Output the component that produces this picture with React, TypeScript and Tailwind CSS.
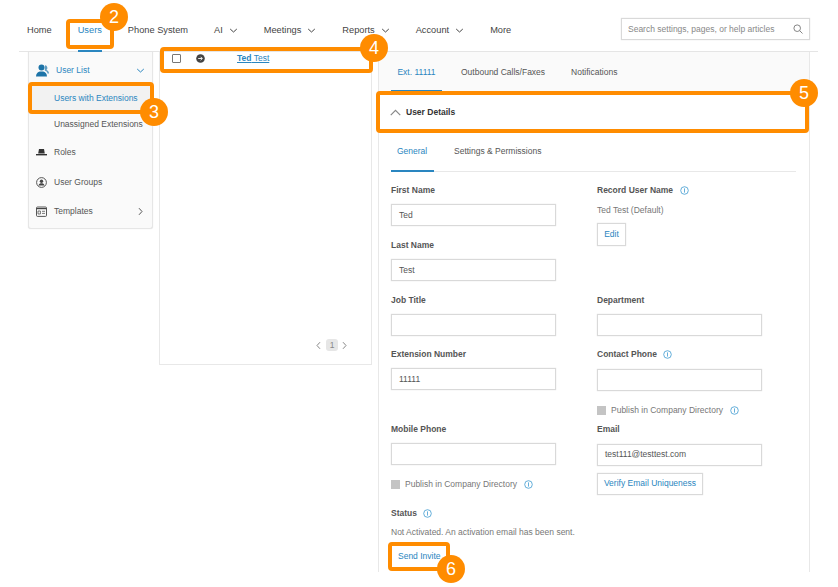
import React from "react";

const Chevron = ({ dir = "down", className = "", size = 9 }: { dir?: "down" | "up" | "right" | "left"; className?: string; size?: number }) => {
  const d = { down: "M1.2 3l3.3 3 3.3-3", up: "M.6 6.6l3.9-3.9 3.9 3.9", right: "M3 1.2l3 3.3-3 3.3", left: "M6 1.2L3 4.5l3 3.3" }[dir];
  return (
    <svg width={size} height={size} viewBox="0 0 9 9" fill="none" stroke="currentColor" strokeWidth="1" className={className}>
      <path d={d} />
    </svg>
  );
};

const Info = () => (
  <svg width="9" height="9" viewBox="0 0 9 9" fill="none" stroke="#3f9bd1" strokeWidth="0.8" className="shrink-0">
    <circle cx="4.5" cy="4.5" r="3.8" />
    <path d="M4.5 2.4v4.2" />
  </svg>
);

const NavItem = ({ label, menu, active }: { label: string; menu?: boolean; active?: boolean }) => (
  <div className={`relative flex h-full items-center gap-[6px] pt-[11px] ${active ? "text-[#2a86c0]" : "text-[#444]"}`}>
    <span>{label}</span>
    {menu && <Chevron className="-mt-[2px]" />}
    {active && <div className="absolute -bottom-px left-0 right-0 h-[2px] bg-[#2a86c0]" />}
  </div>
);

const Label = ({ children, info, gap = "gap-[6px]" }: { children: React.ReactNode; info?: boolean; gap?: string }) => (
  <div className={`flex h-[14px] items-center ${gap} text-[8.5px] font-bold text-[#555]`}>
    <span>{children}</span>
    {info && <Info />}
  </div>
);

const Input = ({ value = "", className = "" }: { value?: string; className?: string }) => (
  <div className={`flex h-[22px] w-[165px] items-center border border-[#d9d9d9] pl-[7px] text-[8.5px] text-[#555] shadow-[0_0_1px_#ddd] ${className}`}>
    {value}
  </div>
);

const Field = ({ label, value, info, mt = "mt-[12px]" }: { label: string; value?: string; info?: boolean; mt?: string }) => (
  <div className={mt}>
    <Label info={info}>{label}</Label>
    <Input value={value} className="mt-[7px]" />
  </div>
);

const Publish = ({ className = "" }: { className?: string }) => (
  <div className={`flex items-center text-[8.5px] text-[#777] ${className}`}>
    <div className="mr-[5px] h-[9px] w-[9px] bg-[#c4c4c4]" />
    <span className="mr-[7px] whitespace-nowrap">Publish in Company Directory</span>
    <Info />
  </div>
);

const SideRow = ({ icon, label, right, className = "" }: { icon: React.ReactNode; label: string; right?: boolean; className?: string }) => (
  <div className={`flex h-[29.5px] items-center text-[#555] ${className}`}>
    <div className="flex w-[25px] shrink-0 justify-center pr-[1px]">{icon}</div>
    <span>{label}</span>
    {right && <Chevron dir="right" className="ml-auto mr-[7px]" />}
  </div>
);

const Callout = ({ n, className }: { n: number; className: string }) => (
  <div className={`absolute flex h-[28px] w-[28px] items-center justify-center rounded-full bg-[#ff8c00] text-[18px] text-white ${className}`}>
    {n}
  </div>
);

const Box = ({ className }: { className: string }) => (
  <div className={`absolute rounded-[4px] border-[4px] border-[#ff8c00] ${className}`} />
);

export default function App() {
  return (
    <div className="relative h-[587px] w-[838px] overflow-hidden bg-white text-[8.5px] font-['Liberation_Sans',Arial,sans-serif]">
      <header className="ml-[19px] flex h-[52px] w-[799px] items-center gap-[26px] border-b border-[#e5e5e5] pl-[8px] text-[9.25px]">
        <NavItem label="Home" />
        <NavItem label="Users" active />
        <NavItem label="Phone System" />
        <NavItem label="AI" menu />
        <NavItem label="Meetings" menu />
        <NavItem label="Reports" menu />
        <NavItem label="Account" menu />
        <NavItem label="More" />
        <div className="ml-auto mr-[8px] mt-[7px] flex h-[22px] w-[189px] items-center justify-between border border-[#d9d9d9] px-[6px] text-[8.5px] text-[#888] shadow-[0_0_1px_#ddd]">
          <span>Search settings, pages, or help articles</span>
          <svg width="10" height="10" viewBox="0 0 10 10" fill="none" stroke="#777" strokeWidth="0.9">
            <circle cx="4.2" cy="4.2" r="3.3" />
            <path d="M6.7 6.7L9.5 9.5" />
          </svg>
        </div>
      </header>

      <div className="flex h-[520px] items-start pl-[28px]">
        <aside className="h-[177px] w-[125px] rounded-b-[3px] border border-t-0 border-[#e6e6e6] bg-[#fafafa] shadow-[0_0_1px_#ddd]">
          <div className="flex h-[30px] items-center pt-[7px] text-[#2a86c0]">
            <div className="flex w-[25px] justify-center">
              <svg width="14" height="13" viewBox="0 0 14 13" fill="#1d74a8">
                <circle cx="6.5" cy="3.6" r="3" />
                <path d="M1 12.5c0-3 2-4.5 3.8-5h3.4c1.8.5 3.8 2 3.8 5z" />
                <path d="M10 1.2a2.7 2.7 0 0 1 1.4 4.8c1.5.5 2.6 1.5 2.6 3.5h-1.5c-.3-1.7-1.4-2.6-2.7-3z" opacity=".7" />
              </svg>
            </div>
            <span className="ml-[2px]">User List</span>
            <Chevron className="ml-auto mr-[7px]" />
          </div>
          <div className="mt-[1px] flex h-[31px] items-center whitespace-nowrap bg-[#f2f2f2] pl-[25px] text-[#2a86c0]">Users with Extensions</div>
          <div className="flex h-[21px] items-center whitespace-nowrap pl-[25px] text-[#555]">Unassigned Extensions</div>
          <div className="mt-[3px]">
            <SideRow
              label="Roles"
              icon={
                <svg width="11" height="7" viewBox="0 0 11 7" fill="#333">
                  <path d="M3 0h5l.8 4.5H2.2z" />
                  <path d="M0 5h11v1.4H0z" />
                </svg>
              }
            />
            <SideRow
              label="User Groups"
              icon={
                <svg width="11" height="11" viewBox="0 0 11 11">
                  <circle cx="5.5" cy="5.5" r="4.9" fill="none" stroke="#444" strokeWidth="0.9" />
                  <circle cx="5.5" cy="4.2" r="1.7" fill="#444" />
                  <path d="M2.6 8.4c.3-1.6 1.5-2.1 2.9-2.1s2.6.5 2.9 2.1z" fill="#444" />
                </svg>
              }
            />
            <SideRow
              label="Templates"
              right
              icon={
                <svg width="11" height="11" viewBox="0 0 11 11">
                  <rect x="0.5" y="1" width="10" height="9.4" rx="1" fill="none" stroke="#444" strokeWidth="0.9" />
                  <path d="M0.5 2h10v1.2H.5z" fill="#444" />
                  <path d="M2 5h2.4v3H2zM6 5.3h3M6 7.4h3" stroke="#444" strokeWidth="0.7" fill="none" />
                </svg>
              }
            />
          </div>
        </aside>

        <section className="ml-[6px] flex h-[313px] w-[213px] flex-col border-x border-b border-[#e8e8e8]">
          <div className="flex items-center text-[#2a86c0]">
            <div className="ml-[12px] h-[9px] w-[9px] rounded-[1px] border border-[#777]" />
            <svg width="9" height="9" viewBox="0 0 9 9" className="ml-[15px]">
              <circle cx="4.5" cy="4.5" r="4.3" fill="#444" />
              <path d="M2.2 4.5h4M4.6 2.8l1.7 1.7-1.7 1.7" stroke="#fff" strokeWidth="0.9" fill="none" />
            </svg>
            <span className="ml-[32px] underline">
              <b>Ted</b> Test
            </span>
          </div>
          <div className="mt-auto mb-[13px] flex items-center justify-end pr-[22px] text-[#888]">
            <Chevron dir="left" />
            <span className="ml-[3px] mr-[2px] flex h-[12px] w-[12px] items-center justify-center rounded-[3px] bg-[#e6e6e6] text-[8.5px]">1</span>
            <Chevron dir="right" />
          </div>
        </section>

        <main className="ml-[6px] h-[520px] w-[432px] border-x border-[#e8e8e8]">
          <div className="flex h-[40px] items-stretch bg-[#fafafa] pl-[12px] text-[#555]">
            <div className="relative flex w-[51px] items-center justify-center text-[#2a86c0]">
              Ext. 11111
              <div className="absolute bottom-0 left-0 right-0 h-[2px] bg-[#2a86c0]" />
            </div>
            <div className="ml-[19px] flex items-center">Outbound Calls/Faxes</div>
            <div className="ml-[26px] flex items-center">Notifications</div>
          </div>

          <div className="flex h-[40px] items-center pl-[11px] text-[#333]">
            <Chevron dir="up" size={11} className="text-[#888]" />
            <span className="ml-[5px] font-bold">User Details</span>
          </div>

          <div className="px-[12px]">
            <div className="flex h-[40px] w-[405px] items-stretch border-b border-[#e8e8e8] text-[#555]">
              <div className="relative flex w-[43px] items-center pl-[6px] text-[#2a86c0]">
                General
                <div className="absolute -bottom-px left-0 right-0 h-[2px] bg-[#2a86c0]" />
              </div>
              <div className="ml-[20px] flex items-center">Settings &amp; Permissions</div>
            </div>

            <div className="mt-[11px] flex gap-[41px]">
              <div className="w-[165px]">
                <Field label="First Name" value="Ted" mt="mt-0" />
                <Field label="Last Name" value="Test" />
                <Field label="Job Title" />
                <Field label="Extension Number" value="11111" mt="mt-[11px]" />
                <Field label="Mobile Phone" mt="mt-[32px]" />
                <Publish className="mt-[13px]" />
                <div className="mt-[16px]">
                  <Label info>Status</Label>
                </div>
                <div className="mt-[5px] whitespace-nowrap text-[#777]">Not Activated. An activation email has been sent.</div>
                <div className="mt-[11px] pl-[7px] text-[#2a86c0]">Send Invite</div>
              </div>

              <div className="w-[165px]">
                <Label info gap="gap-[7px]">Record User Name</Label>
                <div className="mt-[7px] text-[#777]">Ted Test (Default)</div>
                <div className="mt-[6px] flex h-[23px] w-[29px] items-center justify-center border border-[#d9d9d9] text-[#2a86c0] shadow-[0_0_1px_#ddd]">Edit</div>
                <div className="mt-[48px]">
                  <Label>Department</Label>
                  <Input className="mt-[6px]" />
                </div>
                <Field label="Contact Phone" info mt="mt-[12px]" />
                <Publish className="mt-[13px]" />
                <Field label="Email" value="test111@testtest.com" mt="mt-[6px]" />
                <div className="mt-[7px] flex h-[22px] w-[106px] items-center justify-center border border-[#d9d9d9] text-[#2a86c0] shadow-[0_0_1px_#ddd]">Verify Email Uniqueness</div>
              </div>
            </div>
          </div>
        </main>
      </div>

      <Box className="left-[66px] top-[19px] h-[30px] w-[48px]" />
      <Box className="left-[28px] top-[82px] h-[32px] w-[126px]" />
      <Box className="left-[160px] top-[47px] h-[26px] w-[213px]" />
      <Box className="left-[376px] top-[91px] h-[42px] w-[433px]" />
      <Box className="left-[388px] top-[542px] h-[29px] w-[62px]" />
      <Callout n={2} className="left-[100px] top-[3px]" />
      <Callout n={3} className="left-[140px] top-[98px]" />
      <Callout n={4} className="left-[360px] top-[34px]" />
      <Callout n={5} className="left-[790px] top-[79px]" />
      <Callout n={6} className="left-[437px] top-[555px]" />
    </div>
  );
}
